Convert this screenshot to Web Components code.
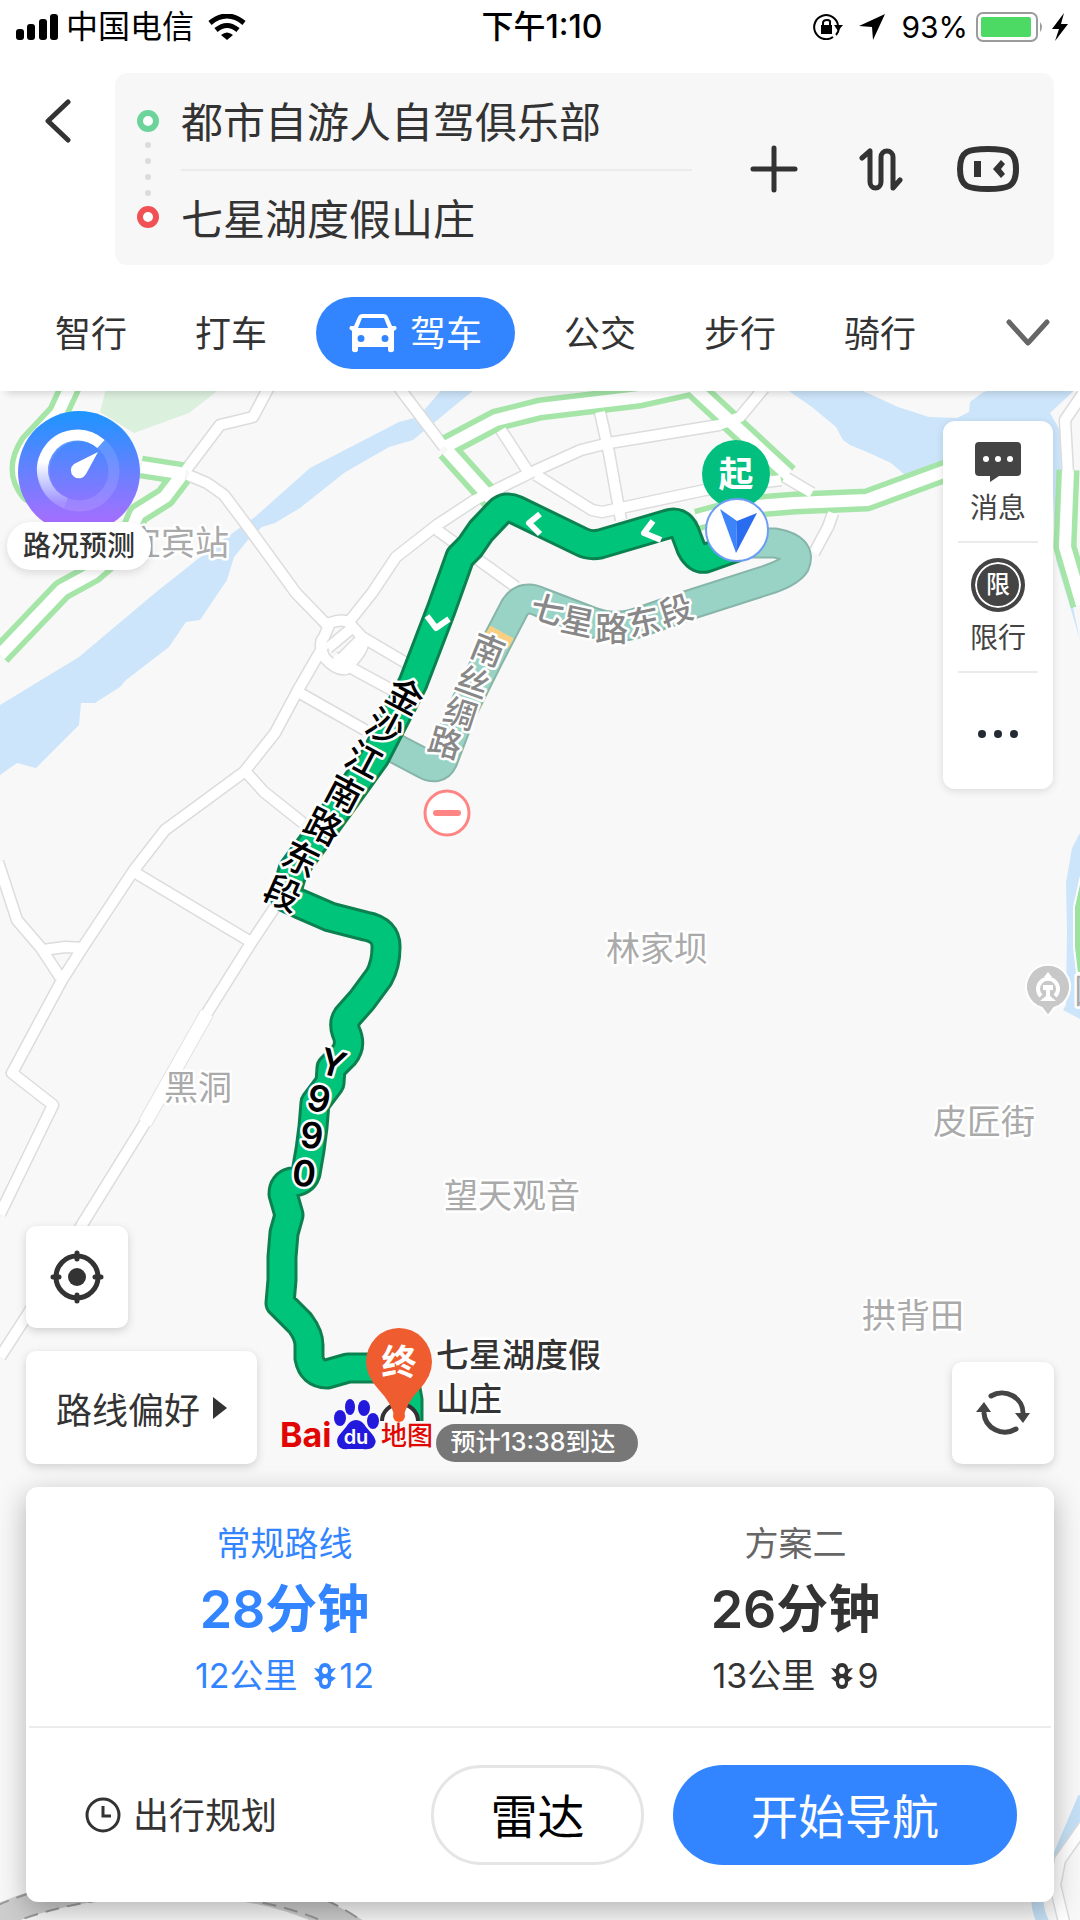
<!DOCTYPE html>
<html lang="zh-CN">
<head>
<meta charset="utf-8">
<meta name="viewport" content="width=device-width, initial-scale=1">
<title>驾车路线</title>
<style>
  html, body { margin: 0; }
  body {
    --blue: #3385ff;
    --ink: #333;
    --line: #ebebeb;
    min-height: 100vh;
    display: flex;
    flex-direction: column;
    background: #fff;
    color: var(--ink);
    font-family: Inter, "Noto Sans CJK SC", sans-serif;
  }
</style>
</head>
<body>
<status-bar carrier="中国电信" time="下午1:10" battery="93%"></status-bar>

<route-header from="都市自游人自驾俱乐部" to="七星湖度假山庄">
  <mode-tab slot="modes">智行</mode-tab>
  <mode-tab slot="modes">打车</mode-tab>
  <mode-tab slot="modes" active>驾车</mode-tab>
  <mode-tab slot="modes">公交</mode-tab>
  <mode-tab slot="modes">步行</mode-tab>
  <mode-tab slot="modes">骑行</mode-tab>
</route-header>

<route-map>
  <traffic-badge slot="top">路况预测</traffic-badge>
  <tool-rail slot="top"></tool-rail>

  <map-button slot="left" icon="locate" label="定位"></map-button>
  <map-button slot="left" icon="triangle">路线偏好</map-button>
  <map-button slot="right" icon="refresh" label="刷新"></map-button>

  <route-card slot="bottom">
    <route-option slot="options" name="常规路线" time="28分钟" distance="12公里" lights="12" selected></route-option>
    <route-option slot="options" name="方案二" time="26分钟" distance="13公里" lights="9"></route-option>
  </route-card>
</route-map>

<script>
const ICONS = {
  back: '<svg width="26" height="44" viewBox="0 0 26 44" fill="none" stroke="#333" stroke-width="5" stroke-linecap="round" stroke-linejoin="round"><path d="M23 3L3 22l20 19"/></svg>',
  plus: '<svg width="48" height="50" viewBox="0 0 48 50" stroke="#333" stroke-width="5" stroke-linecap="round"><path d="M24 4v42M3 25h42"/></svg>',
  swap: '<svg width="44" height="44" viewBox="0 0 44 44" fill="none" stroke="#333" stroke-width="5" stroke-linecap="round" stroke-linejoin="round"><path d="M3 11l8-7v31a5.5 6 0 0 0 11 0V10a6 6 0 0 1 12 0v31l7-8"/></svg>',
  robot: '<svg width="64" height="48" viewBox="0 0 64 48"><path d="M32 4C52 4 60 6 60 24S52 44 32 44 4 42 4 24 12 4 32 4z" fill="none" stroke="#333" stroke-width="6"/><path d="M18 16h7v16h-7zM45 15l4 4-4 5 4 5-4 4-8-9z" fill="#333"/></svg>',
  car: '<svg width="48" height="40" viewBox="0 0 48 40"><path fill="#fff" fill-rule="evenodd" d="M14 1h20c3 0 4 1 5 3l4 9h3c2 0 2 4 0 4l-1 1v19c0 3-6 3-6 0v-3H9v3c0 3-6 3-6 0V18l-1-1c-2 0-2-4 0-4h3l4-9c1-2 2-3 5-3zm-1 4L9 15h30L35 5zM12 22a3 3 0 1 0 0 7 3 3 0 0 0 0-7zm24 0a3 3 0 1 0 0 7 3 3 0 0 0 0-7z"/></svg>',
  down: '<svg width="44" height="28" viewBox="0 0 44 28" fill="none" stroke="#666" stroke-width="5" stroke-linecap="round" stroke-linejoin="round"><path d="M3 3l19 21L41 3"/></svg>',
  locate: '<svg width="54" height="54" viewBox="0 0 54 54" stroke="#333" fill="none" stroke-width="5" stroke-linecap="round"><circle cx="27" cy="27" r="21"/><circle cx="27" cy="27" r="9" fill="#333" stroke="none"/><path d="M27 3v6M27 45v6M3 27h6M45 27h6"/></svg>',
  triangle: '<svg width="14" height="22" viewBox="0 0 14 22"><path d="M0 0l14 11L0 22z" fill="#333"/></svg>',
  refresh: '<svg width="54" height="48" viewBox="0 0 54 48" fill="none" stroke="#444" stroke-width="5" stroke-linecap="round"><path d="M15 7a21 20 0 0 1 32 18"/><path d="M40 40A21 20 0 0 1 8 24"/><path d="M39 24h15l-7 10zM0 23l8-10 7 10z" fill="#444" stroke="none"/></svg>',
  message: '<svg width="46" height="40" viewBox="0 0 46 40"><path d="M4 0h38q4 0 4 4v26q0 4-4 4H24l-9 6v-6H4q-4 0-4-4V4q0-4 4-4z" fill="#444"/><g fill="#fff"><circle cx="11" cy="17" r="3"/><circle cx="23" cy="17" r="3"/><circle cx="35" cy="17" r="3"/></g></svg>',
  more: '<svg width="44" height="10" viewBox="0 0 44 10" fill="#222b33"><circle cx="6" cy="5" r="4"/><circle cx="22" cy="5" r="4"/><circle cx="38" cy="5" r="4"/></svg>',
  clock: '<svg width="36" height="36" viewBox="0 0 36 36" fill="none" stroke="#333" stroke-width="3"><circle cx="18" cy="18" r="16"/><path d="M18 9v10h8"/></svg>',
  light: '<svg width="22" height="26" viewBox="0 0 22 26" fill="currentColor"><path fill-rule="evenodd" d="M11 0c4 0 6 3 6 6v14c0 3-2 6-6 6s-6-3-6-6V6c0-3 2-6 6-6zm0 4a2.500 3 0 0 0 0 7 2.500 3 0 0 0 0-7zm0 11a2.500 3 0 0 0 0 7 2.500 3 0 0 0 0-7z"/><path d="M0 5l5 1v5zM0 15l5-2v6zM22 5l-5 1v5zM22 15l-5-2v6z"/></svg>',
};

const BASE = `
  :host { box-sizing: border-box; }
  * { box-sizing: border-box; }
  button, input { font: inherit; color: inherit; border: 0; padding: 0; margin: 0; background: none; }
  button { cursor: pointer; }
  svg { display: block; flex: none; }
`;

// Shared shadow root setup: each element only supplies css() and html().
class BaseElement extends HTMLElement {
  connectedCallback() {
    if (this.shadowRoot) return;
    this.attachShadow({ mode: "open" }).innerHTML =
      "<style>" + BASE + this.css() + "</style>" + this.html();
  }
  attr(name) { return this.getAttribute(name) || ""; }
}

class StatusBar extends BaseElement {
  css() {
    return `
      :host { display: grid; grid-template-columns: 1fr auto 1fr; align-items: center;
        height: 54px; padding: 0 12px 0 16px; color: #000; font-size: 32px; line-height: 40px; }
      .left, .right { display: flex; align-items: center; gap: 8px; }
      .left .wifi { margin-left: 6px; }
      .right { justify-content: flex-end; font-size: 30px; }
      .lock, .arrow { margin-right: 8px; }
      .time { font-weight: 500; }
    `;
  }
  html() {
    return `
      <div class="left">
        <svg width="42" height="26" viewBox="0 0 42 26"><rect y="15" width="8" height="11" rx="3"/><rect x="11" y="10" width="8" height="16" rx="3"/><rect x="23" y="5" width="8" height="21" rx="3"/><rect x="34" width="8" height="26" rx="3"/></svg>
        <span>${this.attr("carrier")}</span>
        <svg class="wifi" width="38" height="26" viewBox="0 0 38 26" fill="none" stroke="#000" stroke-width="5"><path d="M2 9Q19-5 36 9"/><path d="M8 16Q19 7 30 16"/><path d="M19 26l-6-5q6-5 12 0z" fill="#000" stroke="none"/></svg>
      </div>
      <div class="time">${this.attr("time")}</div>
      <div class="right">
        <svg class="lock" width="30" height="26" viewBox="0 0 30 26" fill="none" stroke="#000" stroke-width="2"><path d="M20 23A12 12 0 1 1 25 11"/><path d="M26 14a12 12 0 0 1-3 7"/><path d="M21 11h9l-5 6z" fill="#000" stroke="none"/><rect x="8" y="11" width="11" height="9" fill="#000" stroke="none"/><path d="M10 11V9q0-3 4-3t3 3v2"/></svg>
        <svg class="arrow" width="26" height="26" viewBox="0 0 26 26"><path d="M26 0L14 26l-1-13L0 12z"/></svg>
        <span>${this.attr("battery")}</span>
        <svg width="68" height="30" viewBox="0 0 68 30"><rect x="1" y="1" width="60" height="28" rx="6" fill="#fff" stroke="#9b9b9b" stroke-width="2"/><rect x="5" y="5" width="50" height="20" rx="2" fill="#4cd964"/><path d="M64 10q4 5 0 10z" fill="#9b9b9b"/></svg>
        <svg width="16" height="28" viewBox="0 0 16 28"><path d="M12 0L0 16h7L3 28l13-17H9z"/></svg>
      </div>`;
  }
}

class RouteHeader extends BaseElement {
  css() {
    return `
      :host { display: block; position: relative; z-index: 1; padding: 19px 0 22px; background: #fff;
        box-shadow: 0 8px 8px -6px rgba(0,0,0,.16); }
      .search { display: flex; align-items: flex-start; padding: 0 26px; }
      .back { width: 89px; height: 96px; padding-left: 19px; flex: none; }
      .box { flex: 1; min-width: 0; display: flex; align-items: center; height: 192px;
        padding-right: 13px; border-radius: 12px; background: #f7f7f7; }
      .marks { width: 66px; flex: none; display: flex; flex-direction: column; align-items: center; gap: 10px; }
      .ring { width: 22px; height: 22px; border: 6px solid #6cd49b; border-radius: 50%; background: #fff; }
      .ring.end { border-color: #f15055; }
      .dot { width: 6px; height: 6px; border-radius: 50%; background: #dcdcdc; }
      .fields { flex: 1; min-width: 0; margin-right: 28px; }
      input { display: block; width: 100%; height: 96px; padding-bottom: 4px; font-size: 42px; outline: 0; }
      input + input { border-top: 2px solid var(--line); }
      .act { width: 107px; height: 96px; flex: none; display: grid; place-items: center; }
      nav { display: flex; align-items: center; margin-top: 32px; padding: 0 30px 0 21px; }
      .more { margin-left: auto; height: 72px; }
    `;
  }
  html() {
    return `
      <div class="search">
        <button class="back" type="button" aria-label="返回">${ICONS.back}</button>
        <div class="box">
          <div class="marks"><i class="ring"></i><i class="dot"></i><i class="dot"></i><i class="dot"></i><i class="dot"></i><i class="ring end"></i></div>
          <div class="fields">
            <input type="text" aria-label="起点" value="${this.attr("from")}">
            <input type="text" aria-label="终点" value="${this.attr("to")}">
          </div>
          <button class="act" type="button" aria-label="添加途经点">${ICONS.plus}</button>
          <button class="act" type="button" aria-label="交换起终点">${ICONS.swap}</button>
          <button class="act" type="button" aria-label="语音助手">${ICONS.robot}</button>
        </div>
      </div>
      <nav>
        <slot name="modes"></slot>
        <button class="more" type="button" aria-label="更多出行方式">${ICONS.down}</button>
      </nav>`;
  }
}

class ModeTab extends BaseElement {
  css() {
    return `
      :host { display: block; flex: none; }
      button { display: flex; align-items: center; gap: 13px; height: 72px; padding: 0 34px; font-size: 36px; }
      span { padding-bottom: 4px; }
      :host([active]) { margin: 0 15px; }
      :host([active]) button { padding: 0 33px; border-radius: 36px; background: var(--blue); color: #fff; }
    `;
  }
  html() {
    return `<button type="button">${this.hasAttribute("active") ? ICONS.car : ""}<span><slot></slot></span></button>`;
  }
}

class TrafficBadge extends BaseElement {
  css() {
    return `
      :host { display: block; }
      button { display: flex; flex-direction: column; align-items: center; }
      .dial { width: 122px; height: 111px; overflow: hidden; }
      .label { padding: 0 16px; border-radius: 24px; background: #fff; font-size: 28px;
        line-height: 48px; font-weight: 500; box-shadow: 0 3px 8px rgba(0,0,0,.12); }
    `;
  }
  html() {
    return `
      <button type="button">
        <svg class="dial" viewBox="0 0 122 111">
          <defs>
            <linearGradient id="bg" x1="0" y1="0" x2="0" y2="1"><stop offset="0" stop-color="#1c95ff"/><stop offset="1" stop-color="#b36bff"/></linearGradient>
            <linearGradient id="arc" x1="0" y1="0" x2="0" y2="1"><stop offset=".4" stop-color="#fff"/><stop offset="1" stop-color="#fff" stop-opacity=".1"/></linearGradient>
          </defs>
          <circle cx="61" cy="61" r="61" fill="url(#bg)"/>
          <circle cx="61" cy="60" r="35" fill="none" stroke="#fff" stroke-opacity=".12" stroke-width="11"/>
          <path d="M83 33A35 35 0 1 0 48 92" fill="none" stroke="url(#arc)" stroke-width="11"/>
          <path d="M80 41L68 63a8 8 0 1 1-12-10z" fill="#fff"/>
        </svg>
        <span class="label"><slot></slot></span>
      </button>`;
  }
}

class ToolRail extends BaseElement {
  css() {
    return `
      :host { display: flex; flex-direction: column; width: 110px; margin-top: 10px; padding: 0 15px;
        border-radius: 12px; background: #fff; box-shadow: 0 2px 8px rgba(0,0,0,.12); color: #444; }
      button { display: flex; flex-direction: column; align-items: center; justify-content: center;
        gap: 8px; height: 130px; font-size: 28px; line-height: 36px; }
      button:first-of-type { height: 120px; padding-top: 6px; }
      button + button { border-top: 2px solid var(--line); }
      button:last-of-type { height: 118px; padding-top: 6px; }
      .limit { width: 54px; height: 54px; border: 4px solid #444; border-radius: 50%; background: #444;
        box-shadow: inset 0 0 0 2px #fff; display: grid; place-items: center;
        color: #fff; font-size: 24px; font-weight: 500; }
    `;
  }
  html() {
    return `
      <button type="button">${ICONS.message}<span>消息</span></button>
      <button type="button"><span class="limit">限</span><span>限行</span></button>
      <button type="button" aria-label="更多">${ICONS.more}</button>`;
  }
}

class MapButton extends BaseElement {
  css() {
    return `
      :host { display: block; }
      button { display: flex; align-items: center; justify-content: center; gap: 13px;
        min-width: 102px; height: 102px; border-radius: 10px; background: #fff;
        font-size: 36px; box-shadow: 0 3px 10px rgba(0,0,0,.16); }
      button.text { height: 113px; padding: 0 30px; }
    `;
  }
  html() {
    const label = this.attr("label");
    return label
      ? `<button type="button" aria-label="${label}">${ICONS[this.attr("icon")]}</button>`
      : `<button class="text" type="button"><slot></slot>${ICONS[this.attr("icon")]}</button>`;
  }
}

class RouteOption extends BaseElement {
  css() {
    return `
      :host { display: block; flex: 1; color: var(--ink); }
      :host([selected]) { color: var(--blue); }
      button { width: 100%; padding: 33px 0 26px; display: flex; flex-direction: column; align-items: center; }
      .name, .info { font-size: 34px; line-height: 48px; }
      .name { color: #666; }
      :host([selected]) .name { color: inherit; }
      .time { font-size: 52px; line-height: 84px; font-weight: 600; }
      .info { display: flex; align-items: center; }
      .info svg { margin: 0 4px 0 16px; }
    `;
  }
  html() {
    return `
      <button type="button" aria-pressed="${this.hasAttribute("selected")}">
        <span class="name">${this.attr("name")}</span>
        <span class="time">${this.attr("time")}</span>
        <span class="info"><span>${this.attr("distance")}</span>${ICONS.light}<span>${this.attr("lights")}</span></span>
      </button>`;
  }
}

class RouteCard extends BaseElement {
  css() {
    return `
      :host { display: block; border-radius: 12px; background: #fff; box-shadow: 0 8px 28px rgba(0,0,0,.28); }
      .options { display: flex; margin: 0 3px; border-bottom: 2px solid var(--line); }
      .actions { display: flex; align-items: center; padding: 37px 37px 37px 59px; }
      .plan { display: flex; align-items: center; gap: 12px; margin-right: auto; font-size: 36px; }
      .plan span { padding-bottom: 4px; }
      .radar, .go { height: 100px; padding-bottom: 4px; border-radius: 50px; font-size: 47px; }
      .radar { width: 213px; border: 3px solid #e5e5e5; color: #000; }
      .go { width: 344px; margin-left: 29px; background: var(--blue); color: #fff; }
    `;
  }
  html() {
    return `
      <div class="options"><slot name="options"></slot></div>
      <div class="actions">
        <button class="plan" type="button">${ICONS.clock}<span>出行规划</span></button>
        <button class="radar" type="button">雷达</button>
        <button class="go" type="button">开始导航</button>
      </div>`;
  }
}

// ---- map drawing ----

const ROADS = [
  "M270 385L253 417 220 425 186 470",
  "M397 385L444 447",
  "M188 475L207 483 224 495 248 527 296 593 329 627",
  "M324 645L298 690 275 733 244 772 165 830 134 870 83 947 62 980 12 1073 53 1105 0 1214",
  "M348 623L372 593 396 557 437 525 475 500 530 473 581 450 609 443 719 425 740 417 764 388",
  "M437 530L516 587",
  "M362 637L406 663",
  "M334 657L355 670 392 690",
  "M298 692L365 730",
  "M501 430L529 473",
  "M600 412L609 453 621 520",
  "M536 475L592 510 602 512 705 490 781 480",
  "M785 477L812 493",
  "M833 513L828 527 814 553",
  "M134 872L251 942",
  "M275 907L251 943 207 1013 145 1123 83 1223 26 1317 0 1357",
  "M246 772L264 792 303 823",
  "M-2 862L17 920 41 948 60 977",
  "M43 950L65 947 85 948",
  "M1084 392L1065 420 1068 475",
  "M330 623q16-6 22 3l10 11q4 8-6 20l-10 12q-10 2-22-12-6-14 0-20z",
  "M328 648L352 628M340 660L360 640",
  "M1084 1826L1060 1860 1055 1885 1064 1922",
];
const HIGHWAYS = [
  "M71 385L58 413 30 443Q12 470 30 492L60 500",
  "M141 467L186 474",
  "M181 476L165 497 138 514 125 545 93 573 62 590 0 655",
  "M445 447L496 420 540 409 640 397 690 386",
  "M447 450L492 500",
  "M692 386L788 475",
  "M1000 452L943 472 867 500 795 503 745 507 697 520",
  "M1068 470L1065 547 1082 605",
];
const ALT = "M737 543L775 543Q802 548 795 564Q790 572 770 579L689 605 640 622Q615 631 592 622L540 602Q524 594 515 607L503 630 489 657 461 713 443 760Q438 771 425 764L385 743";
const MAIN = "M737 547L706 558Q697 560 691 548L685 532Q680 520 668 524L600 544Q590 546 582 542L516 510Q506 505 499 512L481 531 470 547 460 557 441 610 413 683 375 757 344 800 293 870 285 897 300 904 330 917 365 926Q387 930 386 948Q386 964 379 977L362 1000 347 1017Q343 1023 346 1032Q352 1045 344 1055L331 1068 330 1083 315 1103 313 1127 310 1150 306 1173Q303 1182 292 1182Q283 1184 283 1194L289 1215 284 1233 282 1257 282 1280 280 1303 300 1323Q309 1335 309 1345V1358Q312 1374 327 1374L348 1368H399";

// Labels that follow a road: one [x, y, angle] per character, x/y being its centre.
const ROAD_LABELS = [
  { text: "金沙江南路东段", size: 36, fill: "#000", weight: 500,
    at: [[405,696,28],[385,727,28],[364,760,28],[344,794,28],[323,826,27],[301,859,26],[283,893,24]] },
  { text: "南丝绸路", size: 33, fill: "#888", weight: 500,
    at: [[488,650,22],[473,682,20],[460,713,18],[445,743,16]] },
  { text: "七星路东段", size: 33, fill: "#888", weight: 500,
    at: [[547,609,18],[578,621,12],[611,629,0],[644,622,-12],[676,610,-18]] },
  { text: "Y990", size: 36, fill: "#000", weight: 600, latin: true,
    at: [[332,1062,16],[319,1098,12],[312,1135,6],[304,1173,6]] },
];
const PLACES = [
  ["宜宾站", 178, 543], ["林家坝", 657, 949], ["黑洞", 198, 1088], ["望天观音", 512, 1196],
  ["皮匠街", 984, 1122], ["拱背田", 913, 1316], ["国", 1091, 991],
];

const roadLabel = ({ text, size, fill, weight, latin, at }) => {
  const half = (latin ? 0.63 : 1) * size / 2;
  const rise = size * 0.37;
  const xs = [], ys = [];
  for (const [cx, cy, deg] of at) {
    const a = deg * Math.PI / 180;
    xs.push(Math.round(cx - half * Math.cos(a) - rise * Math.sin(a)));
    ys.push(Math.round(cy - half * Math.sin(a) + rise * Math.cos(a)));
  }
  return `<text class="halo" font-size="${size}" font-weight="${weight}" fill="${fill}" x="${xs.join(" ")}" y="${ys.join(" ")}" rotate="${at.map((p) => p[2]).join(" ")}">${text}</text>`;
};
const paths = (list) => list.map((d) => `<path d="${d}"/>`).join("");

class RouteMap extends BaseElement {
  css() {
    return `
      :host { display: flex; flex-direction: column; flex: 1; position: relative; overflow: hidden; background: #f8f8f8; }
      .canvas { position: absolute; inset: 0; width: 100%; height: 100%; }
      .top, .mid, .bottom { position: relative; }
      .top { display: flex; justify-content: space-between; align-items: flex-start; padding: 20px 27px 0 7px; }
      .mid { display: flex; justify-content: space-between; align-items: flex-end; margin-top: auto; padding: 0 26px; }
      .stack { display: flex; flex-direction: column; align-items: flex-start; gap: 23px; }
      .bottom { padding: 23px 26px 18px; }
      .line path { fill: none; stroke-linejoin: round; }
      .halo { stroke: #fff; stroke-width: 5px; stroke-linejoin: round; paint-order: stroke; }
    `;
  }
  html() {
    return `
      <svg class="canvas" viewBox="0 391 1080 1529" preserveAspectRatio="xMidYMid slice">
        <path fill="#dcf0de" d="M107 385H225L189 413 134 433 100 412z"/>
        <g fill="#cce5fa">
          <path d="M0 705L79 657 155 593 213 547 255 517 310 468 399 422 418 417 446 385H480L458 403 413 440 389 447 344 473 300 508 275 523 262 527 248 540 234 557 227 580 200 620 186 622 169 647 126 680 120 687 95 703H81L79 725 36 768 17 763 0 775z"/>
          <path d="M780 385H850L898 407 929 417 957 418 969 412 970 402 982 393 1000 385H1080L1050 413 1060 430 1064 480 1060 545 1080 640 1056 560 1050 430 943 463 905 475 891 463 867 452 850 445 843 440 836 427 812 407z"/>
          <path d="M1080 833L1072 848 1066 883 1067 930 1066 1005 1063 1010 1080 1019z"/>
        </g>
        <path fill="#9be39f" stroke="#fff" stroke-width="2" d="M1084 862L1074 907V947L1077 973H1084z"/>
        <g class="line">
          <path d="M1084 1797L1058 1858Q1026 1890 1044 1924" stroke="#c5e0f6" stroke-width="12"/>
          <path d="M-4 1917Q70 1884 175 1884T356 1930" stroke="#cdcdcd" stroke-width="24"/>
          <path d="M-4 1906Q70 1873 175 1873M4 1926Q80 1895 175 1895M175 1873Q300 1873 366 1924M175 1895Q280 1895 344 1932" stroke="#999" stroke-width="2" stroke-dasharray="14 8"/>
          <g stroke="#dcdcdc" stroke-width="13">${paths(ROADS)}</g>
          <g stroke="#a5e5a8" stroke-width="23">${paths(HIGHWAYS)}</g>
          <g stroke="#fff" stroke-width="10">${paths(ROADS)}</g>
          <g stroke="#fff" stroke-width="12">${paths(HIGHWAYS)}</g>
          <path d="M207 1013L145 1123" stroke="#e2e2e2" stroke-width="15"/>
          <path d="M207 1013L145 1123" stroke="#fff" stroke-width="13"/>
        </g>

        <g font-size="34" fill="#aaa" text-anchor="middle">
          ${PLACES.map(([t, x, y]) => `<text class="halo" x="${x}" y="${y + 12}">${t}</text>`).join("")}
        </g>
        <path d="M1048 1016l-6-8a22 22 0 1 1 12 0z" fill="#c8c8c8" stroke="#fff" stroke-width="2"/>
        <path d="M1041 996a10 10 0 1 1 14 0" fill="none" stroke="#fff" stroke-width="4"/>
        <path d="M1043 985h10v5h-3v6l6 5h-16l6-5v-6h-3zM1048 972l4 5h-8z" fill="#fff"/>

        <g class="line">
          <path d="${ALT}" stroke="#87b5a9" stroke-width="31"/>
          <path d="${ALT}" stroke="#99d3c5" stroke-width="27"/>
          <path d="M502 632L497 641" stroke="#f8cf83" stroke-width="27"/>
          <g stroke="#0c8150" stroke-width="31"><path d="M404 1378L408 1400V1421"/><path d="${MAIN}"/></g>
          <g stroke="#00c47a" stroke-width="25"><path d="M404 1378L408 1400V1421"/><path d="${MAIN}"/></g>
          <path d="M653 521L644 533 661 540M540 514L529 523 540 534M427 616L436 628 449 619" stroke="#fff" stroke-width="6"/>
        </g>
        ${ROAD_LABELS.map(roadLabel).join("")}

        <circle cx="447" cy="813" r="22" fill="#fff" stroke="#ff8585" stroke-width="3"/>
        <path d="M436 813h22" stroke="#ff8585" stroke-width="6" stroke-linecap="round"/>

        <circle cx="736" cy="474" r="34" fill="#03bf7f"/>
        <text x="736" y="487" font-size="35" font-weight="700" fill="#fff" text-anchor="middle">起</text>
        <circle cx="737" cy="530" r="31" fill="#fff" stroke="#6c9cf5" stroke-width="2"/>
        <path d="M720 509L737 521 736 553z" fill="#3d84fb"/>
        <path d="M757 513L737 521 736 553z" fill="#2a6cf0"/>

        <path d="M382 1421a18 17 0 0 1 36 0" fill="#fff" stroke="#333" stroke-width="4"/>
        <circle cx="399" cy="1416" r="6" fill="#ff5a1f"/>
        <path d="M399 1328a33 34 0 0 1 33 34q0 14-13 28-12 12-16 28h-8q-4-16-16-28-13-14-13-28a33 34 0 0 1 33-34z" fill="#ee5c30"/>
        <text x="399" y="1375" font-size="35" font-weight="700" fill="#fff" text-anchor="middle">终</text>

        <text x="280" y="1447" font-size="34" font-weight="700" fill="#e10601">Bai</text>
        <g fill="#2319dc">
          <ellipse cx="340" cy="1418" rx="6" ry="8"/>
          <ellipse cx="350" cy="1407" rx="5" ry="8"/>
          <ellipse cx="364" cy="1408" rx="6" ry="8"/>
          <ellipse cx="373" cy="1421" rx="6" ry="8"/>
          <path d="M356 1420q6 0 10 7l6 7q6 7 2 12-3 4-11 3h-15q-8 1-10-4-3-6 3-12l5-6q4-7 10-7z"/>
        </g>
        <text x="356" y="1444" font-size="20" font-weight="600" fill="#fff" text-anchor="middle">du</text>
        <text x="381" y="1445" font-size="26" font-weight="500" fill="#e10601">地图</text>

        <g font-size="33" font-weight="500" fill="#333">
          <text class="halo" x="436" y="1367">七星湖度假</text>
          <text class="halo" x="436" y="1411">山庄</text>
        </g>
        <rect x="436" y="1424" width="202" height="38" rx="19" fill="#777"/>
        <text x="533" y="1451" font-size="25" font-weight="500" fill="#fff" text-anchor="middle">预计13:38到达</text>
      </svg>

      <div class="top"><slot name="top"></slot></div>
      <div class="mid">
        <div class="stack"><slot name="left"></slot></div>
        <slot name="right"></slot>
      </div>
      <div class="bottom"><slot name="bottom"></slot></div>`;
  }
}

customElements.define("status-bar", StatusBar);
customElements.define("route-header", RouteHeader);
customElements.define("mode-tab", ModeTab);
customElements.define("traffic-badge", TrafficBadge);
customElements.define("tool-rail", ToolRail);
customElements.define("map-button", MapButton);
customElements.define("route-option", RouteOption);
customElements.define("route-card", RouteCard);
customElements.define("route-map", RouteMap);
</script>
</body>
</html>
